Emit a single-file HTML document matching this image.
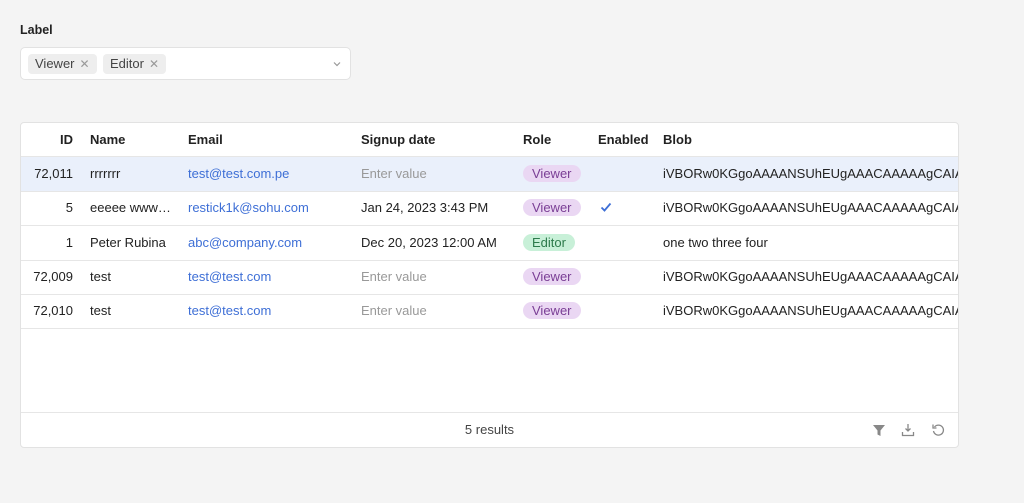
<!DOCTYPE html>
<html><head><style>
*{box-sizing:border-box;margin:0;padding:0}
body{width:1024px;height:503px;background:#f4f4f4;font-family:"Liberation Sans",Arial,sans-serif;font-size:13px;color:#222;position:relative;overflow:hidden}
.lbl{position:absolute;left:20px;top:23px;font-weight:bold;font-size:12.5px}
.sel{position:absolute;left:20px;top:47px;width:331px;height:33px;background:#fff;border:1px solid #e2e2e2;border-radius:5px}
.tag{position:absolute;top:6px;height:20px;background:#eee;border-radius:4px;padding:0 7px;line-height:20px;color:#444;font-size:13px}
.tag span{color:#999;margin-left:5px;font-size:12px}
.tbl{position:absolute;left:20px;top:122px;width:939px;height:326px;background:#fff;border:1px solid #e2e2e2;border-radius:4px;overflow:hidden}
.row{position:absolute;left:0;width:937px;height:35px;border-bottom:1px solid #e6e6e6}
.c{position:absolute;top:0;line-height:34px;white-space:nowrap}
.h .c{font-weight:bold}
.id{right:885px;text-align:right}
.email{color:#3e6fd6}
.ph{color:#999}
.pill{display:inline-block;line-height:17px;height:17px;padding:0 9px;border-radius:9px;font-size:13px}
.v{background:#ead7f3;color:#7a3e95}
.e{background:#c8f0d8;color:#2c7a4b}
.foot{position:absolute;left:0;top:289px;width:937px;height:36px;border-top:1px solid #e6e6e6}
</style></head><body>
<div class="lbl">Label</div>
<div class="sel">
<div class="tag" style="left:7px">Viewer<span>✕</span></div>
<div class="tag" style="left:82px">Editor<span>✕</span></div>
<svg style="position:absolute;right:9px;top:13px" width="8" height="6" viewBox="0 0 8 6"><path d="M1 1.5L4 4.5L7 1.5" fill="none" stroke="#999" stroke-width="1.2"/></svg>
</div>
<div class="tbl">
<div class="row h" style="top:0;height:34px">
<div class="c id" style="right:885px">ID</div><div class="c" style="left:69px">Name</div><div class="c" style="left:167px">Email</div><div class="c" style="left:340px">Signup date</div><div class="c" style="left:502px">Role</div><div class="c" style="left:577px">Enabled</div><div class="c" style="left:642px">Blob</div>
</div>
<div class="row" style="top:34px;background:#eaf0fb">
<div class="c id">72,011</div><div class="c" style="left:69px">rrrrrrr</div><div class="c email" style="left:167px">test@test.com.pe</div><div class="c ph" style="left:340px">Enter value</div><div class="c" style="left:502px"><span class="pill v">Viewer</span></div><div class="c" style="left:642px">iVBORw0KGgoAAAANSUhEUgAAACAAAAAgCAIAAAD8GO2jAAAA</div>
</div>
<div class="row" style="top:68px">
<div class="c id">5</div><div class="c" style="left:69px">eeeee www…</div><div class="c email" style="left:167px">restick1k@sohu.com</div><div class="c" style="left:340px">Jan 24, 2023 3:43 PM</div><div class="c" style="left:502px"><span class="pill v">Viewer</span></div><div class="c" style="left:579px"><svg width="12" height="10" viewBox="0 0 12 10"><path d="M1.5 5.5L4.5 8.5L10.5 1.5" fill="none" stroke="#3e6fd6" stroke-width="1.8"/></svg></div><div class="c" style="left:642px">iVBORw0KGgoAAAANSUhEUgAAACAAAAAgCAIAAAD8GO2jAAAA</div>
</div>
<div class="row" style="top:103px">
<div class="c id">1</div><div class="c" style="left:69px">Peter Rubina</div><div class="c email" style="left:167px">abc@company.com</div><div class="c" style="left:340px">Dec 20, 2023 12:00 AM</div><div class="c" style="left:502px"><span class="pill e">Editor</span></div><div class="c" style="left:642px">one two three four</div>
</div>
<div class="row" style="top:137px">
<div class="c id">72,009</div><div class="c" style="left:69px">test</div><div class="c email" style="left:167px">test@test.com</div><div class="c ph" style="left:340px">Enter value</div><div class="c" style="left:502px"><span class="pill v">Viewer</span></div><div class="c" style="left:642px">iVBORw0KGgoAAAANSUhEUgAAACAAAAAgCAIAAAD8GO2jAAAA</div>
</div>
<div class="row" style="top:171px">
<div class="c id">72,010</div><div class="c" style="left:69px">test</div><div class="c email" style="left:167px">test@test.com</div><div class="c ph" style="left:340px">Enter value</div><div class="c" style="left:502px"><span class="pill v">Viewer</span></div><div class="c" style="left:642px">iVBORw0KGgoAAAANSUhEUgAAACAAAAAgCAIAAAD8GO2jAAAA</div>
</div>
<div class="foot">
<div style="position:absolute;left:0;width:937px;text-align:center;line-height:34px;color:#444">5 results</div>
<svg style="position:absolute;left:851px;top:11px" width="14" height="13" viewBox="0 0 14 13"><path d="M1 1H13L8.5 6.5V12L5.5 10.5V6.5Z" fill="#888"/></svg>
<svg style="position:absolute;left:880px;top:10px" width="14" height="14" viewBox="0 0 14 14"><path d="M7 1V8M4.5 5.5L7 8L9.5 5.5M1.5 9V12.5H12.5V9" fill="none" stroke="#888" stroke-width="1.3"/></svg>
<svg style="position:absolute;left:910px;top:10px" width="14" height="14" viewBox="0 0 14 14"><path d="M3.5 4A5 5 0 1 1 2.5 8" fill="none" stroke="#888" stroke-width="1.3"/><path d="M2 1.5V5H5.5" fill="none" stroke="#888" stroke-width="1.3"/></svg>
</div>
</div>
</body></html>
